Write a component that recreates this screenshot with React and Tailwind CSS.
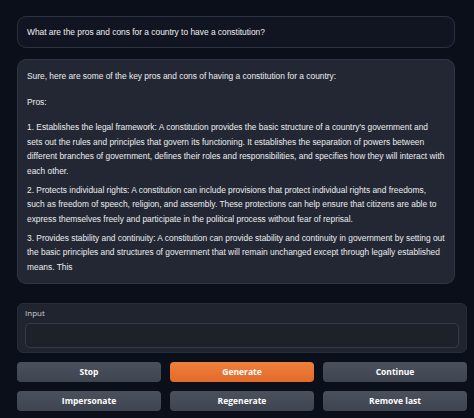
import React from "react";

const paras = [
  "1. Establishes the legal framework: A constitution provides the basic structure of a country's government and sets out the rules and principles that govern its functioning. It establishes the separation of powers between different branches of government, defines their roles and responsibilities, and specifies how they will interact with each other.",
  "2. Protects individual rights: A constitution can include provisions that protect individual rights and freedoms, such as freedom of speech, religion, and assembly. These protections can help ensure that citizens are able to express themselves freely and participate in the political process without fear of reprisal.",
  "3. Provides stability and continuity: A constitution can provide stability and continuity in government by setting out the basic principles and structures of government that will remain unchanged except through legally established means. This",
];

const Btn = ({ children, primary }) => (
  <button
    className={`h-[20px] rounded-[4px] text-[8.5px] font-bold text-white ${
      primary
        ? "bg-gradient-to-b from-[#f0803c] to-[#e2692a]"
        : "bg-gradient-to-b from-[#4b515c] to-[#3f4550]"
    }`}
  >
    {children}
  </button>
);

export default function App() {
  return (
    <div className="min-h-[418px] w-full bg-[#0b0f19] pl-[17px] pr-[7px] pt-[16px] text-[#eef0f3] font-['Liberation_Sans',Arial,sans-serif]">
      <div className="pr-[12px]">
        <div className="h-[32px] flex items-center rounded-[9px] border border-[#2b3240] bg-[#111521] px-[9px] text-[8.4px]">
          What are the pros and cons for a country to have a constitution?
        </div>
        <div className="mt-[11px] rounded-[9px] border border-[#2f3542] bg-[#222733] px-[9px] pt-[9px] pb-[9px] text-[8.4px] leading-[14.5px] text-[#eceef1]">
          <p>Sure, here are some of the key pros and cons of having a constitution for a country:</p>
          <p className="mt-[11px]">Pros:</p>
          {paras.map((p, i) => (
            <p key={i} className={i === 0 ? "mt-[11px]" : "mt-[4.5px]"}>
              {p}
            </p>
          ))}
        </div>
      </div>

      <div className="mt-[19px] rounded-[6px] border border-[#262c38] bg-[#1f242e] px-[7px] pt-[4px] pb-[4px]">
        <div className="text-[8px] text-[#cdd1d7] font-['Open_Sans',sans-serif] leading-[10px]">Input</div>
        <div className="mt-[5px] h-[25px] rounded-[5px] border border-[#343b48] bg-[#1c212a]" />
      </div>

      <div className="mt-[9px] grid grid-cols-3 gap-x-[9px] gap-y-[9px] font-['Open_Sans',sans-serif]">
        <Btn>Stop</Btn>
        <Btn primary>Generate</Btn>
        <Btn>Continue</Btn>
        <Btn>Impersonate</Btn>
        <Btn>Regenerate</Btn>
        <Btn>Remove last</Btn>
      </div>
    </div>
  );
}
